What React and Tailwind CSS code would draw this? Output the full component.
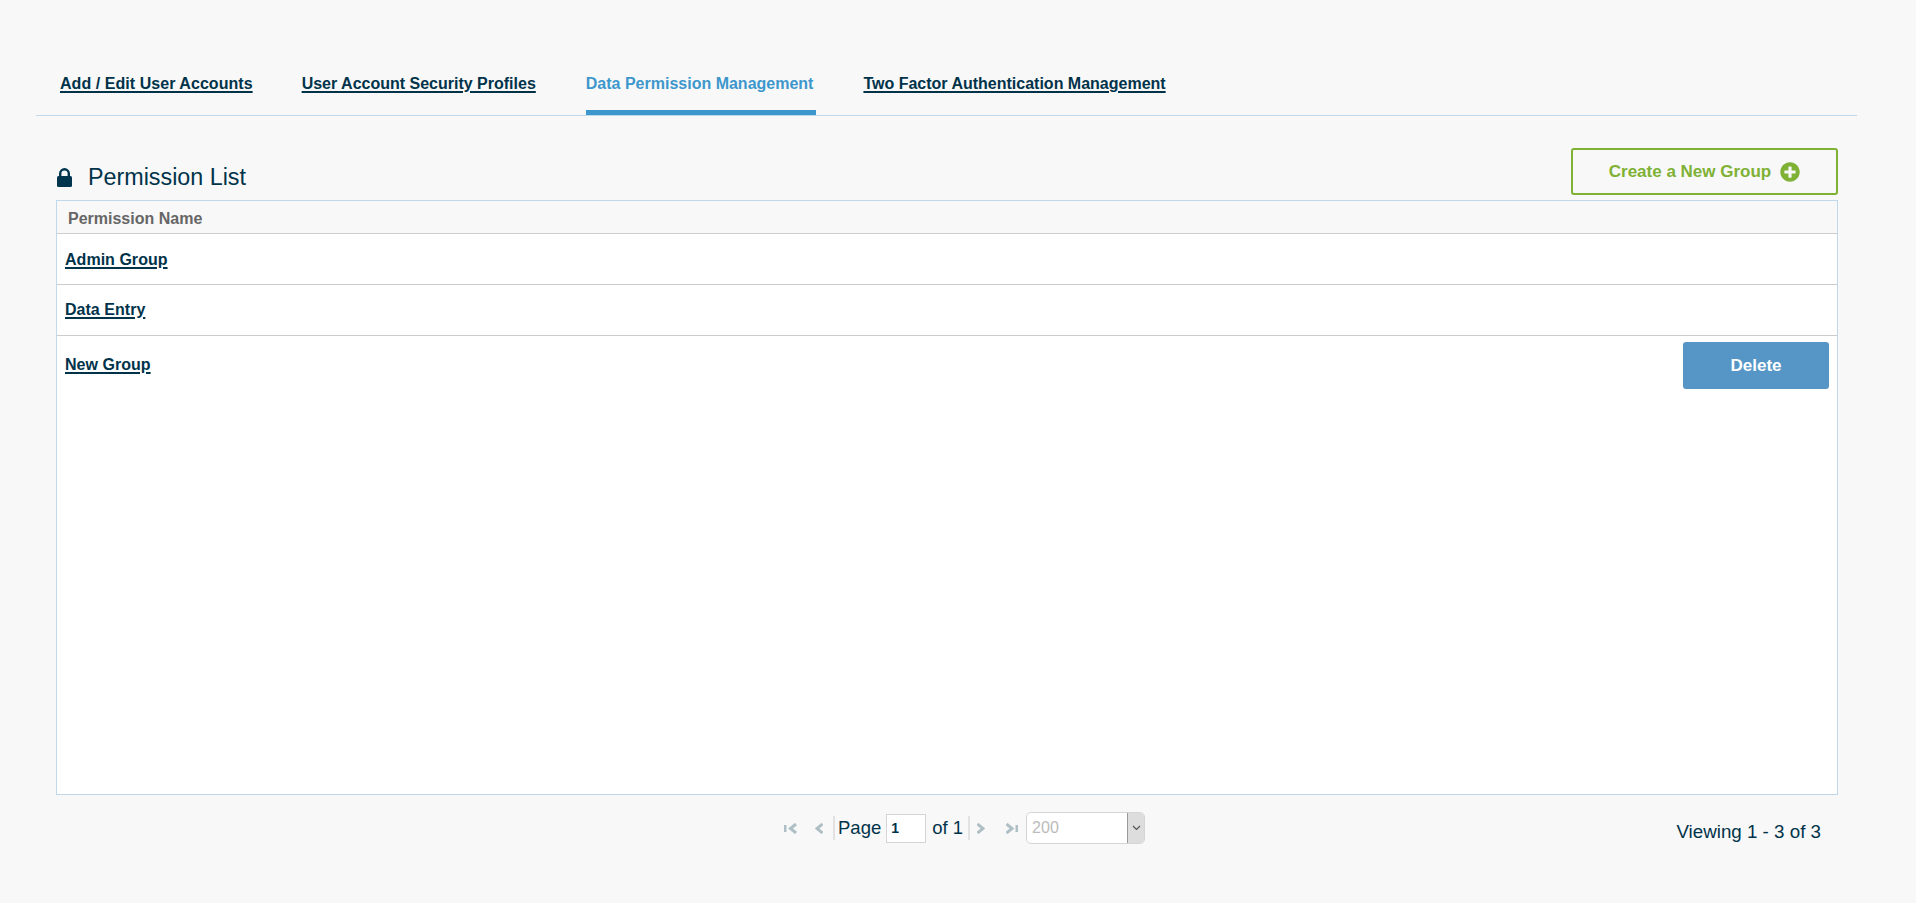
import React from "react";
import { FaPlusCircle } from "react-icons/fa";

const font = "font-['Liberation_Sans',Arial,sans-serif]";

function Tab({ children, active, className = "" }) {
  return (
    <a
      className={
        "block h-[44px] border-b-[5px] pt-[1px] text-[16px] font-bold leading-[24px] " +
        (active
          ? "border-[#3d97cc] pr-[3px] text-[#3d97cc] "
          : "border-transparent text-[#00334a] underline decoration-2 underline-offset-2 ") +
        className
      }
    >
      {children}
    </a>
  );
}

function Row({ children, className = "" }) {
  return (
    <div className={"flex h-[51px] items-center justify-between border-b border-[#cccccc] " + className}>
      <a className="ml-[8px] text-[16px] font-bold leading-[24px] tracking-[0.03px] text-[#00334a] underline decoration-2 underline-offset-2">
        {children}
      </a>
    </div>
  );
}

function PagerIcon({ d, w, className }) {
  return (
    <svg width={w} height="11" viewBox={`0 0 ${w} 11`} fill="none" stroke="#aebfc6" strokeWidth="3" className={className}>
      <path d={d} />
    </svg>
  );
}

export default function App() {
  return (
    <div className={font + " min-h-[903px] bg-[#f8f8f8] text-[#00334a]"}>
      <div className="h-[71px]" />
      <div className="ml-[36px] mr-[59px] flex gap-[50px] border-b border-[#c0d8ea] pl-[24px]">
        <Tab className="mr-[-1px] tracking-[0.05px]">Add / Edit User Accounts</Tab>
        <Tab>User Account Security Profiles</Tab>
        <Tab active className="mr-[-3px]">Data Permission Management</Tab>
        <Tab>Two Factor Authentication Management</Tab>
      </div>

      <div className="ml-[56px] mr-[78px]">
        <div className="mt-[32px] flex h-[47px] items-end justify-between">
          <div className="flex items-center pb-[3px] pl-[1px]">
            <svg width="15" height="19" viewBox="0 0 15 19" className="text-[#00354d]">
              <path d="M3.2 9V5.6a4.3 4.3 0 0 1 8.6 0V9" fill="none" stroke="currentColor" strokeWidth="2.4" />
              <rect x="0" y="8" width="15" height="11" rx="1.5" fill="currentColor" />
            </svg>
            <span className="ml-[16px] text-[23.3px] leading-[30px]">Permission List</span>
          </div>
          <button className="flex h-[47px] w-[267px] items-center justify-center rounded-[3px] border-2 border-[#7fb135] text-[17px] font-bold text-[#7fb135]">
            <span>Create a New Group</span>
            <FaPlusCircle className="ml-[9px] h-[20px] w-[20px]" />
          </button>
        </div>

        <div className="mt-[5px] h-[595px] border border-[#c0d8ea] bg-white">
          <div className="flex h-[33px] items-center border-b border-[#cccccc] bg-[#f8f8f8] pl-[11px] pt-[4px] text-[16px] font-bold text-[#666666]">
            Permission Name
          </div>
          <Row className="pt-[2px]">Admin Group</Row>
          <Row>Data Entry</Row>
          <div className="flex items-start justify-between pr-[8px] pt-[6px]">
            <a className="ml-[8px] mt-[11px] text-[16px] font-bold leading-[24px] tracking-[0.03px] text-[#00334a] underline decoration-2 underline-offset-2">
              New Group
            </a>
            <button className="h-[47px] w-[146px] rounded-[3px] bg-[#5596c6] text-[17px] font-bold text-white">Delete</button>
          </div>
        </div>

        <div className="mt-[17px] flex items-center justify-between">
          <div className="ml-[728px] flex h-[32px] items-center text-[18.5px]">
            <PagerIcon w={13} d="M1 2v7M12 1 6.5 5.5 12 10" />
            <PagerIcon w={8} d="M7.5 1 2 5.5 7.5 10" className="ml-[18px]" />
            <span className="ml-[10px] mr-[3px] h-[24px] w-[2px] bg-[#e2e2e2]" />
            <span>Page</span>
            <input
              readOnly
              value="1"
              className="ml-[5px] h-[29px] w-[40px] border border-[#d5d5d5] bg-white pl-[4px] text-[14px] font-bold text-[#00334a] outline-none"
            />
            <span className="ml-[6px]">of 1</span>
            <span className="ml-[5px] h-[24px] w-[2px] bg-[#e2e2e2]" />
            <PagerIcon w={8} d="M.5 1 6 5.5.5 10" className="ml-[7px]" />
            <PagerIcon w={12} d="M.5 1 6 5.5.5 10M11 2v7" className="ml-[21px]" />
            <div className="ml-[8px] flex h-[32px] w-[119px] overflow-hidden rounded-[5px] border border-[#d5d5d5] bg-white">
              <span className="flex-1 pl-[5px] text-[16px] leading-[30px] text-[#bbbbbb]">200</span>
              <span className="flex w-[17px] items-center justify-center border-l border-[#999999] bg-[#dddddd]">
                <svg width="9" height="6" viewBox="0 0 9 6" fill="none" stroke="#555555" strokeWidth="1.2">
                  <path d="M1 1l3.5 3.5L8 1" />
                </svg>
              </span>
            </div>
          </div>
          <span className="mr-[17px] mt-[7px] text-[18.75px] leading-[24px]">Viewing 1 - 3 of 3</span>
        </div>
      </div>
    </div>
  );
}
